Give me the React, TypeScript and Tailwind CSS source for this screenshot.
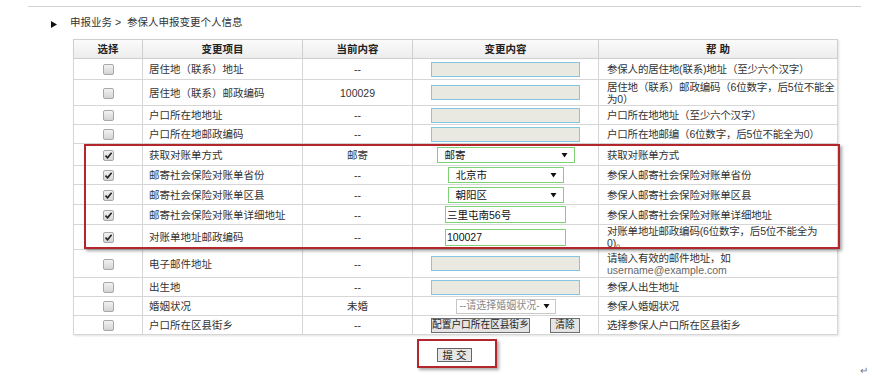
import React from "react";

type Kind = "input" | "select" | "text" | "marriage" | "buttons";

interface Row {
  item: string;
  cur: string;
  kind: Kind;
  value?: string;
  width?: string;
  checked?: boolean;
  help: React.ReactNode;
  h: string;
}

const rows: Row[] = [
  { item: "居住地（联系）地址", cur: "--", kind: "input", help: "参保人的居住地(联系)地址（至少六个汉字）", h: "h-[21px]" },
  {
    item: "居住地（联系）邮政编码",
    cur: "100029",
    kind: "input",
    help: (
      <>
        居住地（联系）邮政编码（6位数字，后5位不能全
        <br />
        为0）
      </>
    ),
    h: "h-[26px]",
  },
  { item: "户口所在地地址", cur: "--", kind: "input", help: "户口所在地地址（至少六个汉字）", h: "h-[19px]" },
  { item: "户口所在地邮政编码", cur: "--", kind: "input", help: "户口所在地邮编（6位数字，后5位不能全为0）", h: "h-[19px]" },
  { item: "获取对账单方式", cur: "邮寄", kind: "select", value: "邮寄", width: "w-[138px]", checked: true, help: "获取对账单方式", h: "h-[22px]" },
  { item: "邮寄社会保险对账单省份", cur: "--", kind: "select", value: "北京市", width: "w-[116px]", checked: true, help: "参保人邮寄社会保险对账单省份", h: "h-[19px]" },
  { item: "邮寄社会保险对账单区县", cur: "--", kind: "select", value: "朝阳区", width: "w-[116px]", checked: true, help: "参保人邮寄社会保险对账单区县", h: "h-[20px]" },
  { item: "邮寄社会保险对账单详细地址", cur: "--", kind: "text", value: "三里屯南56号", checked: true, help: "参保人邮寄社会保险对账单详细地址", h: "h-[20px]" },
  {
    item: "对账单地址邮政编码",
    cur: "--",
    kind: "text",
    value: "100027",
    checked: true,
    help: (
      <>
        对账单地址邮政编码(6位数字，后5位不能全为
        <br />
        0)。
      </>
    ),
    h: "h-[25px]",
  },
  {
    item: "电子邮件地址",
    cur: "--",
    kind: "input",
    help: (
      <>
        请输入有效的邮件地址，如
        <br />
        <span className="text-[#666] tracking-normal">username@example.com</span>
      </>
    ),
    h: "h-[28px]",
  },
  { item: "出生地", cur: "--", kind: "input", help: "参保人出生地址", h: "h-[19px]" },
  { item: "婚姻状况", cur: "未婚", kind: "marriage", help: "参保人婚姻状况", h: "h-[19px]" },
  { item: "户口所在区县街乡", cur: "--", kind: "buttons", help: "选择参保人户口所在区县街乡", h: "h-[19px]" },
];

function Check({ on }: { on?: boolean }) {
  return (
    <span className="inline-flex w-[11px] h-[11px] items-center justify-center rounded-[2px] border border-[#a8a8a8] bg-gradient-to-b from-[#f2f2f2] to-[#d4d4d4] align-middle">
      {on && (
        <svg width="9" height="9" viewBox="0 0 9 9">
          <path d="M1.5 4.6 L3.6 6.8 L7.6 1.8" stroke="#222" strokeWidth="1.6" fill="none" />
        </svg>
      )}
    </span>
  );
}

function Arrow() {
  return (
    <svg width="7" height="6" viewBox="0 0 7 6" className="shrink-0">
      <path d="M0.5 1 L6.5 1 L3.5 5.5 Z" fill="#111" />
    </svg>
  );
}

function Field({ row }: { row: Row }) {
  if (row.kind === "input") {
    return <div className="mx-auto w-[149px] h-[15px] border border-[#83c6e0] bg-[#e9e9e2]" />;
  }
  if (row.kind === "select") {
    return (
      <div className={`mx-auto ${row.width} h-[16px] border border-[#7fd276] bg-white flex items-center justify-between pl-[7px] pr-[6px]`}>
        <span className="text-[#111] whitespace-nowrap">{row.value}</span>
        <Arrow />
      </div>
    );
  }
  if (row.kind === "text") {
    return (
      <div className="mx-auto w-[121px] h-[17px] border border-[#7fd276] bg-white flex items-center pl-[1px]">
        <span className="text-[#111] whitespace-nowrap">{row.value}</span>
      </div>
    );
  }
  if (row.kind === "marriage") {
    return (
      <div className="mx-auto w-[100px] h-[15px] border border-[#c8c8c8] bg-white flex items-center justify-between pl-[3px] pr-[5px]">
        <span className="text-[#8a8a8a] whitespace-nowrap text-[10px]">--请选择婚姻状况-</span>
        <Arrow />
      </div>
    );
  }
  return (
    <div className="flex items-center justify-center gap-[20px]">
      <button className="h-[15px] w-[99px] border border-[#6e6e6e] bg-[#e4e4e4] leading-none text-[9.7px] text-[#222] whitespace-nowrap">配置户口所在区县街乡</button>
      <button className="h-[15px] w-[30px] border border-[#6e6e6e] bg-[#e4e4e4] leading-none text-[9.7px] text-[#222]">清除</button>
    </div>
  );
}

export default function App() {
  return (
    <div className="relative w-[872px] h-[385px] overflow-hidden bg-white text-[10.5px] text-[#333] font-['Liberation_Sans','Noto_Sans_CJK_SC',sans-serif]">
      <div className="ml-[28px] mt-[6px] w-[833px] border-t border-[#d2d2d2]" />

      <div className="flex items-center ml-[51px] mt-[10px] h-[12px]">
        <svg width="6" height="7" viewBox="0 0 6 7" className="mt-[3px]">
          <path d="M0 0 L6 3.5 L0 7 Z" fill="#111" />
        </svg>
        <span className="ml-[13px]">申报业务 &gt;&nbsp; 参保人申报变更个人信息</span>
      </div>

      <table className="ml-[73px] mt-[10px] w-[764px] table-fixed border-collapse border border-[#cfcfcf] leading-[12px] shadow-[1px_1px_2px_rgba(0,0,0,0.12)]">
        <colgroup>
          <col className="w-[69px]" />
          <col className="w-[160px]" />
          <col className="w-[110px]" />
          <col className="w-[186px]" />
          <col className="w-[239px]" />
        </colgroup>
        <thead>
          <tr className="h-[19px] bg-gradient-to-b from-[#fbfbfb] to-[#ececec] font-bold text-[#222]">
            <th className="border border-[#cfcfcf] p-0">选择</th>
            <th className="border border-[#cfcfcf] p-0">变更项目</th>
            <th className="border border-[#cfcfcf] p-0">当前内容</th>
            <th className="border border-[#cfcfcf] p-0">变更内容</th>
            <th className="border border-[#cfcfcf] p-0">帮 助</th>
          </tr>
        </thead>
        <tbody>
          {rows.map((row) => (
            <tr key={row.item} className={row.h}>
              <td className="border border-[#d6d6d6] p-0 text-center">
                <Check on={row.checked} />
              </td>
              <td className="border border-[#d6d6d6] p-0 pl-[6px] text-left whitespace-nowrap">{row.item}</td>
              <td className="border border-[#d6d6d6] p-0 text-center text-[#333]">{row.cur}</td>
              <td className="border border-[#d6d6d6] p-0">
                <Field row={row} />
              </td>
              <td className="border border-[#d6d6d6] p-0 pl-[8px] text-left whitespace-nowrap tracking-[-0.2px]">{row.help}</td>
            </tr>
          ))}
        </tbody>
      </table>

      <div className="ml-[417px] mt-[4px] w-[80px] h-[29px] border-2 border-[#b3262b] shadow-[2px_2px_3px_rgba(0,0,0,0.35)] pl-[18px] pt-[7px]">
        <button className="h-[14px] w-[35px] border border-[#666] bg-[#e6e6e6] leading-none text-[#222]">提 交</button>
      </div>

      <span className="absolute left-[860px] top-[363px] text-[10px] text-[#777]">↵</span>

      <div className="absolute left-[84px] top-[144px] w-[756px] h-[105px] border-2 border-[#b3262b] shadow-[2px_2px_3px_rgba(0,0,0,0.35)] pointer-events-none" />
    </div>
  );
}
